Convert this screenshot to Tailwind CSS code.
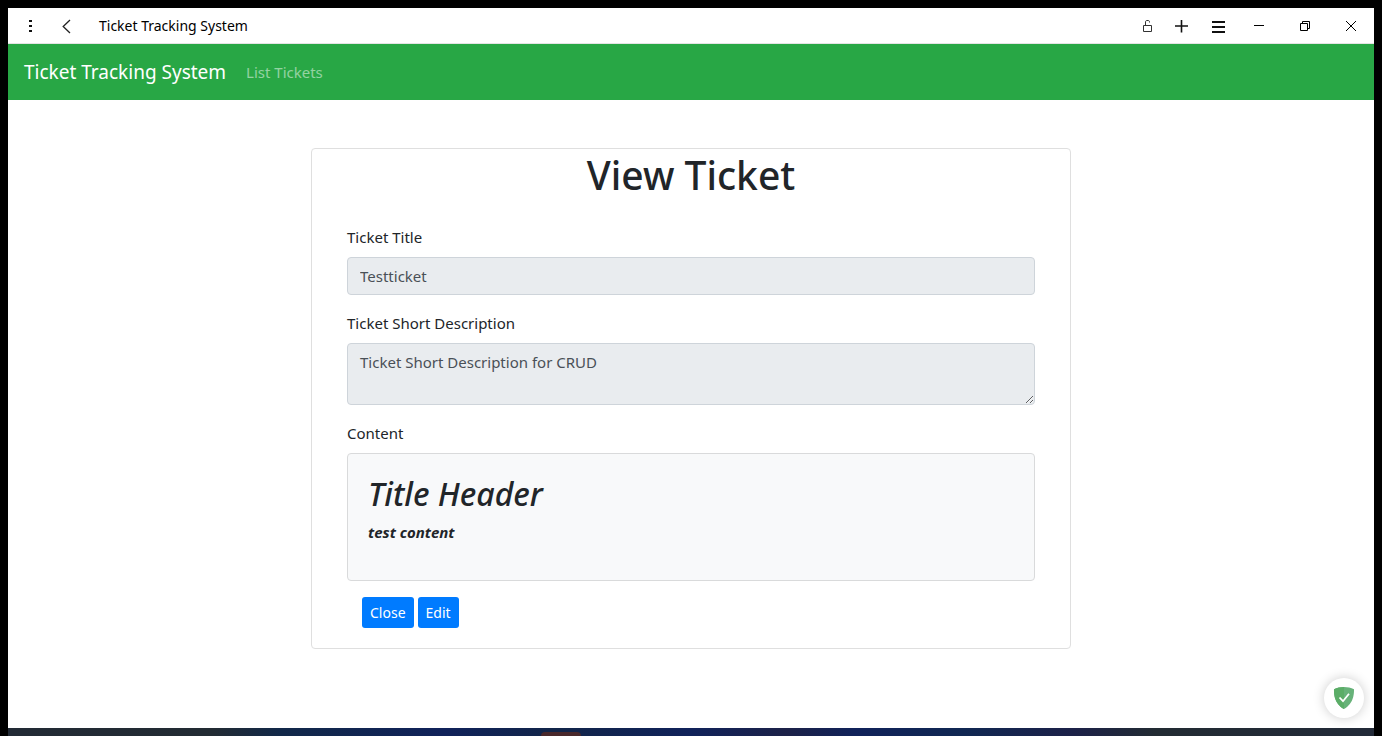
<!DOCTYPE html>
<html lang="en">
<head>
<meta charset="utf-8">
<meta name="viewport" content="width=device-width, initial-scale=1">
<title>Ticket Tracking System</title>
<script src="https://cdn.jsdelivr.net/npm/@tailwindcss/browser@4"></script>
</head>
<body class="flex min-h-screen flex-col bg-black px-2 pt-2 font-['Noto_Sans',sans-serif] text-[15px] leading-6 text-[#212529]">
  <header class="flex h-9 shrink-0 items-center justify-between border-b border-[#e4e4e4] bg-white text-black">
    <div class="flex items-center">
      <button type="button" aria-label="Menu" class="ml-3.5 size-4">
        <svg class="size-4" viewBox="0 0 16 16" fill="#111"><path d="M7 2h3v2H7zM7 7h3v2H7zM7 12h3v2H7z"/></svg>
      </button>
      <button type="button" aria-label="Back" class="ml-5 size-4">
        <svg class="size-4" viewBox="0 0 16 16" fill="none" stroke="#222" stroke-width="1.3"><path d="M12 2 5.200 8.500 12 15"/></svg>
      </button>
      <p class="ml-[25px] text-sm">Ticket Tracking System</p>
    </div>
    <div class="flex items-center">
      <button type="button" aria-label="Site security" class="mr-[18px] size-4">
        <svg class="size-4" viewBox="0 0 16 16" fill="none" stroke="#333"><path d="M3.500 7.500h8v6h-8zM5.500 7.500V4c0-1 .5-1.500 1.500-1.500h1c1 0 1.500.5 1.500 1.500v.5"/></svg>
      </button>
      <button type="button" aria-label="New tab" class="mr-5 size-4">
        <svg class="size-4" viewBox="0 0 16 16" fill="#111"><path d="M1 7.200h13v1.600H1zM6.700 2h1.600v12.500H6.700z"/></svg>
      </button>
      <button type="button" aria-label="Options" class="mr-[26px] size-4">
        <svg class="size-4" viewBox="0 0 16 16" fill="#111"><path d="M2 3h13v2H2zM2 8h13v2H2zM2 13h13v2H2z"/></svg>
      </button>
      <button type="button" aria-label="Minimize" class="mr-[30px] size-4">
        <svg class="size-4" viewBox="0 0 16 16" fill="#000"><path d="M2 7h10v1H2z"/></svg>
      </button>
      <button type="button" aria-label="Restore" class="mr-[30px] size-4">
        <svg class="size-4" viewBox="0 0 16 16" fill="none" stroke="#000"><path d="M2.500 5.500h7v7h-7zM4.500 5.500v-2h7v7h-2"/></svg>
      </button>
      <button type="button" aria-label="Close window" class="mr-3.5 size-4">
        <svg class="size-4" viewBox="0 0 16 16" fill="none" stroke="#000"><path d="m2 3 10 10M12 3 2 13"/></svg>
      </button>
    </div>
  </header>

  <nav class="flex h-14 shrink-0 items-center bg-[#28a745] px-4">
    <a href="#" class="text-[19px] text-white">Ticket Tracking System</a>
    <a href="#" class="ml-5 text-white/50">List Tickets</a>
  </nav>

  <main class="relative flex-1 bg-white px-4 py-12">
    <section class="mx-auto max-w-[760px] rounded-[4px] border border-[#dfdfdf] px-[35px] pb-5">
      <h1 class="mb-6 text-center text-[39px] leading-[52px] font-medium">View Ticket</h1>
      <form>
        <div class="mb-4">
          <label for="title" class="mb-2 block">Ticket Title</label>
          <input id="title" type="text" readonly value="Testticket" class="block h-[38px] w-full rounded-[4px] border border-[#ced4da] bg-[#e9ecef] px-3 text-[#495057]">
        </div>
        <div class="mb-4">
          <label for="desc" class="mb-2 block">Ticket Short Description</label>
          <textarea id="desc" rows="2" readonly class="block h-[62px] w-full resize-y overflow-auto rounded-[4px] border border-[#ced4da] bg-[#e9ecef] px-3 py-1.5 text-[#495057]">Ticket Short Description for CRUD</textarea>
        </div>
        <div class="mb-4">
          <p class="mb-2">Content</p>
          <div class="rounded-[4px] border border-[#d9dadb] bg-[#f8f9fa] p-5">
            <h2 class="mb-1.5 text-[32px] leading-10 font-medium italic">Title Header</h2>
            <p class="mb-4 font-bold italic">test content</p>
          </div>
        </div>
        <div class="flex gap-1 px-[15px] text-sm text-white">
          <button type="button" class="h-[31px] rounded-[3px] bg-[#007bff] px-2">Close</button>
          <button type="button" class="h-[31px] rounded-[3px] bg-[#007bff] px-2">Edit</button>
        </div>
      </form>
    </section>
    <button type="button" aria-label="Protection status" class="absolute right-2.5 bottom-2.5 flex size-10 items-center justify-center rounded-full bg-white shadow-[0_0_12px_rgba(0,0,0,0.2)]">
      <svg class="size-6" viewBox="0 0 24 24" fill="none"><path fill="#67b279" d="M12 1C8.500 1 5 1.800 2 3.200 2 7 1.700 17 12 23 22.300 17 22 7 22 3.200 19 1.800 15.500 1 12 1Z"/><path fill="#5bad67" d="M12 1C8.500 1 5 1.800 2 3.200 2 7 1.700 17 12 23Z"/><path stroke="#fff" stroke-width="1.800" d="m7.500 11.500 3.500 3.700 6-7.500"/></svg>
    </button>
  </main>

  <footer class="relative h-2 shrink-0 bg-[linear-gradient(to_right,#222a35,#222b33_15%,#112849_20%,#10225a_32%,#112549_40%,#10225a_50%,#1c2148_57%,#10225a_62%,#102752_70%,#1c2148_78%,#222b33_84%,#222a38)]">
    <div class="absolute bottom-0 left-[39%] h-1 w-10 rounded-t-[4px] bg-[#49282b]"></div>
  </footer>
</body>
</html>
